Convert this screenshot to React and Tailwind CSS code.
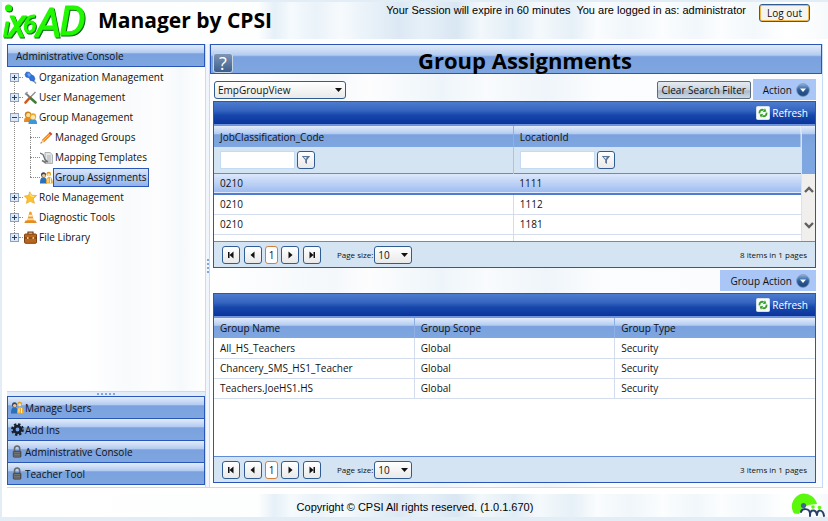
import { useState } from 'react'

const streaks =
  'bg-[linear-gradient(90deg,#ffffff_0%,#fdfefe_31%,#e6f0f8_33%,#f5fafd_35%,#eaf3f9_38%,#f6fafd_41%,#eaf3f9_44%,#dce9f4_48%,#e6f0f8_51%,#d9e7f3_55%,#f2f8fb_58%,#e1edf6_62%,#f4f9fc_65%,#e6f0f7_69%,#fafcfe_72%,#f0f6fa_76%,#fbfdfe_80%,#f1f7fb_84%,#fbfdfe_87%,#f3f8fb_91%,#ffffff_95%,#f7fafc_100%)]'
const glossy = 'bg-[linear-gradient(180deg,#e3ecfa_0%,#b4ccf2_36%,#7ba2de_42%,#7ea6e0_100%)]'
const navy = 'bg-[linear-gradient(180deg,#4d7bcf_0%,#3464bf_40%,#1747ab_60%,#0a349b_100%)]'
const softButton = 'border border-[#2f5d93] rounded-[3px] bg-[linear-gradient(180deg,#ffffff,#e9e9e9)]'

const tree = [
  { label: 'Organization Management', icon: PinIcon },
  { label: 'User Management', icon: ToolsIcon },
  {
    label: 'Group Management',
    icon: PeopleIcon,
    children: [
      { label: 'Managed Groups', icon: PencilIcon },
      { label: 'Mapping Templates', icon: TemplateIcon },
      { label: 'Group Assignments', icon: AssignIcon },
    ],
  },
  { label: 'Role Management', icon: StarIcon },
  { label: 'Diagnostic Tools', icon: ConeIcon },
  { label: 'File Library', icon: CaseIcon },
]

const panels = [
  { label: 'Manage Users', icon: AssignIcon },
  { label: 'Add Ins', icon: GearIcon },
  { label: 'Administrative Console', icon: LockIcon },
  { label: 'Teacher Tool', icon: LockIcon },
]

const jobs = [
  { code: '0210', location: '1111' },
  { code: '0210', location: '1112' },
  { code: '0210', location: '1181' },
]

const groups = [
  { name: 'All_HS_Teachers', scope: 'Global', type: 'Security' },
  { name: 'Chancery_SMS_HS1_Teacher', scope: 'Global', type: 'Security' },
  { name: 'Teachers.JoeHS1.HS', scope: 'Global', type: 'Security' },
]

/* ---------- icons ---------- */

function Logo() {
  return (
    <svg
      viewBox="0 0 84 36"
      className="w-[84px] h-9 shrink-0 overflow-visible drop-shadow-[1px_1px_0_#0b6b12]"
      role="img"
      aria-label="ixoAD"
    >
      <text
        x="1"
        y="35"
        fontFamily="Roboto, Liberation Sans, sans-serif"
        fontStyle="italic"
        strokeWidth="1.2"
        strokeLinejoin="round"
        fill="#22f800"
        stroke="#22f800"
      >
        <tspan fontSize="28">ı</tspan>
        <tspan fontSize="38" dx="-2">x</tspan>
        <tspan fontSize="25" dx="-3" dy="-4">6</tspan>
        <tspan fontSize="41" dx="-1" dy="4">A</tspan>
        <tspan fontSize="41" dx="-2" dy="-2">D</tspan>
      </text>
      <circle cx="6.5" cy="6" r="3.6" fill="#22f800" />
    </svg>
  )
}

function PinIcon() {
  return (
    <svg viewBox="0 0 13 13" className="w-[13px] h-[13px] shrink-0">
      <path d="M8 8l4 4.5" stroke="#8a98a8" strokeWidth="1.5" />
      <path d="M1 3.5L2.5 1l3 .4 1.6 2.2L9.8 5l1.2 3-1.4 2.2-3.2-.8-1.2-2.6L2 6z" fill="#2f74dc" stroke="#1c4fae" strokeWidth=".6" />
      <path d="M3 3l2-1 2 2-2 2z" fill="#6fa6f2" />
    </svg>
  )
}

function ToolsIcon() {
  return (
    <svg viewBox="0 0 13 13" className="w-[13px] h-[13px] shrink-0">
      <path d="M11.5 1L6 6.5" stroke="#8b9096" strokeWidth="1.4" />
      <path d="M6 6.5L1.5 11.5" stroke="#d4561e" strokeWidth="2.6" strokeLinecap="round" />
      <path d="M1.5 2l4.5 4.5" stroke="#777c80" strokeWidth="2" />
      <path d="M1 3.5L3.5 1" stroke="#9aa0a4" strokeWidth="1.4" />
      <path d="M7 7.5l4.5 4" stroke="#3f7d3a" strokeWidth="2.6" strokeLinecap="round" />
    </svg>
  )
}

function PeopleIcon() {
  return (
    <svg viewBox="0 0 13 13" className="w-[13px] h-[13px] shrink-0">
      <path d="M0 11c0-4 1-5 4-5s3 1 3 5z" fill="#e58a1e" />
      <circle cx="4" cy="3.6" r="3.2" fill="#c98518" />
      <circle cx="4.3" cy="4.2" r="2.1" fill="#ffdca0" />
      <path d="M4.5 13C4.5 9 6 8 8.8 8s4.200 1 4.200 5z" fill="#3b98d8" />
      <circle cx="9" cy="5.4" r="3.2" fill="#e8a928" />
      <circle cx="9" cy="6.2" r="2.2" fill="#ffe6b8" />
    </svg>
  )
}

function PencilIcon() {
  return (
    <svg viewBox="0 0 13 13" className="w-[13px] h-[13px] shrink-0">
      <path d="M.5 12.5l1.3-3.6 2.4 2.3z" fill="#f3d7a8" />
      <path d="M1.8 8.9L8.6 2.2l2.4 2.4-6.8 6.6z" fill="#ee8a22" />
      <path d="M3 10L9.8 3.3" stroke="#ffc45c" />
      <path d="M8.6 2.2L10 .8l2.4 2.3L11 4.6z" fill="#c2492c" />
      <path d="M.5 12.5l.5-1.4.9.9z" fill="#333" />
    </svg>
  )
}

function TemplateIcon() {
  return (
    <svg viewBox="0 0 13 13" className="w-[13px] h-[13px] shrink-0">
      <path d="M5 1.5h5l2.5 2.3v8.7H5z" fill="#e3e5e6" stroke="#9b9fa3" strokeWidth=".8" />
      <path d="M7 5h4M7 7h4M7 9h4M7 11h4" stroke="#a0a4a8" strokeWidth=".8" />
      <path d="M0 2l3 1.5 2 5 3 2.5" stroke="#6b7074" strokeWidth="1.3" fill="none" />
      <path d="M2 9.5l3 1.8 2-1" stroke="#777" strokeWidth="1.6" fill="none" />
    </svg>
  )
}

function AssignIcon() {
  return (
    <svg viewBox="0 0 13 13" className="w-[13px] h-[13px] shrink-0">
      <path d="M0 12.5C0 8 1 6.3 3.4 6.3S7 8 7 12.5z" fill="#2c6fbb" />
      <circle cx="3.5" cy="3.8" r="2.5" fill="#34445e" />
      <circle cx="3.7" cy="4.6" r="1.7" fill="#f2c78c" />
      <circle cx="8.7" cy="3" r="2.3" fill="#dd9a1c" />
      <circle cx="8.7" cy="3.7" r="1.5" fill="#ffe0a6" />
      <path d="M6 12.5C6 8 7 6 9.2 6s3.6 2 3.6 6.5z" fill="#efab2e" />
      <path d="M8 7.5v4M10.5 7v5" stroke="#fff2cc" />
    </svg>
  )
}

function StarIcon() {
  return (
    <svg viewBox="0 0 13 13" className="w-[13px] h-[13px] shrink-0">
      <path d="M5.7.8l2 3.4 5 .3-3.5 3.2 1.3 4.6-4.3-2-3.8 2.2.8-4.6L.4 5l4.1-.6z" fill="#fcc12e" stroke="#e6a01c" strokeWidth=".6" />
      <path d="M5.8 2.5L7 5.2l3 .3" stroke="#ffe88e" fill="none" />
    </svg>
  )
}

function ConeIcon() {
  return (
    <svg viewBox="0 0 13 13" className="w-[13px] h-[13px] shrink-0">
      <path d="M1.5 9.5h10l1.3 2.6H.3z" fill="#e28c24" />
      <path d="M5.5.8h1.8L10 10H3z" fill="#f09a2e" />
      <path d="M4.8 3.8h3.2l.5 1.8H4.2zM3.6 7.6h5.7l.3 1.2H3.2z" fill="#fff3dc" />
    </svg>
  )
}

function CaseIcon() {
  return (
    <svg viewBox="0 0 13 13" className="w-[13px] h-[13px] shrink-0">
      <path d="M4 3V1.2h5V3" stroke="#7c4314" strokeWidth="1.3" fill="none" />
      <rect x=".5" y="3" width="12" height="9.3" rx="1" fill="#b7651f" stroke="#7c4314" />
      <path d="M.5 7h12" stroke="#6d390f" />
      <path d="M3 6h1.6v2H3zM8.5 6h1.6v2H8.5z" fill="#f3c06a" />
    </svg>
  )
}

function GearIcon() {
  return (
    <svg viewBox="0 0 13 13" className="w-[13px] h-[13px] shrink-0">
      <circle cx="6.5" cy="6.5" r="3.3" fill="none" stroke="#17202e" strokeWidth="2.8" />
      <circle cx="6.5" cy="6.5" r="5.3" fill="none" stroke="#17202e" strokeWidth="2.2" strokeDasharray="2.3 1.863" />
    </svg>
  )
}

function LockIcon() {
  return (
    <svg viewBox="0 0 13 13" className="w-[13px] h-[13px] shrink-0">
      <path d="M3.5 6V3.8C3.5 0 8.7 0 8.7 3.8V6" fill="none" stroke="#666b70" strokeWidth="1.6" />
      <rect x="2.2" y="6" width="7.8" height="6.2" rx="1" fill="#56585a" stroke="#3a3c3e" strokeWidth=".6" />
      <path d="M3 7.6h6M3 9.4h6M3 11h6" stroke="#8a8c8e" strokeWidth=".6" />
    </svg>
  )
}

function FunnelIcon() {
  return (
    <svg viewBox="0 0 10 10" className="w-[10px] h-[10px]">
      <path d="M.8 1h8.4L6 5v4L4.2 7.8V5z" fill="#5a7598" />
      <path d="M2.6 2h3.2L4.9 4.2z" fill="#dfe9f5" />
    </svg>
  )
}

function RefreshIcon() {
  return (
    <svg viewBox="0 0 14 14" className="w-[14px] h-[14px] shrink-0">
      <rect x=".5" y=".5" width="13" height="13" rx="1" fill="#f8fbf8" stroke="#d5dfe8" />
      <path d="M3.6 7.4C3 4.6 5.6 3 7.6 4.2" fill="none" stroke="#35a02a" strokeWidth="1.8" />
      <path d="M6.8 6.2l3.6-.6L9 2.3z" fill="#35a02a" />
      <path d="M10.4 6.6c.6 2.8-2 4.4-4 3.2" fill="none" stroke="#35a02a" strokeWidth="1.8" />
      <path d="M7.2 7.8l-3.6.6L5 11.700z" fill="#35a02a" />
    </svg>
  )
}

function RoundArrow() {
  return (
    <svg viewBox="0 0 14 14" className="w-[14px] h-[14px] shrink-0">
      <defs>
        <linearGradient id="ball" x1="0" y1="0" x2="0" y2="1">
          <stop offset="0" stopColor="#8db2dc" />
          <stop offset=".5" stopColor="#2c5c98" />
          <stop offset="1" stopColor="#1d4478" />
        </linearGradient>
      </defs>
      <circle cx="7" cy="7" r="6.4" fill="url(#ball)" stroke="#7d9cc4" strokeWidth=".8" />
      <path d="M4 5.6h6L7 9z" fill="#fff" />
    </svg>
  )
}

function FooterMark() {
  return (
    <svg viewBox="0 0 36 24" className="w-9 h-6" role="img" aria-label="CPSI">
      <path d="M4 20.5A13 13 0 0 1 13 .5 13.5 13.5 0 0 1 27 11l-9 1-6 4-3 5z" fill="#5cf80c" />
      <g fill="none" stroke="#27406a" strokeWidth="2" strokeLinecap="round">
        <path d="M11 19c1-4 8-4 9 1v3M20 22c0-6 6-6 7 0M27 22c0-6 6-6 7 1" />
      </g>
      <circle cx="13.5" cy="12.5" r="2.6" fill="#3e6790" />
      <circle cx="23" cy="14" r="1.8" fill="#5cf80c" />
      <circle cx="29.5" cy="14.5" r="1.8" fill="#5cf80c" />
    </svg>
  )
}

/* ---------- pieces ---------- */

function TreeRow({ item, selected, onSelect }) {
  const Icon = item.icon
  return (
    <button onClick={() => onSelect(item.label)} className="flex items-center h-5 whitespace-nowrap">
      <Icon />
      <span
        className={
          selected
            ? 'h-[19px] leading-[17px] px-px border border-[#2a56b8] bg-[linear-gradient(180deg,#dbe7fb,#8fb2ec)]'
            : 'h-[19px] leading-[17px] px-px border border-transparent'
        }
      >
        {item.label}
      </span>
    </button>
  )
}

function NavTree({ selected, onSelect }) {
  const [open, setOpen] = useState(['Group Management'])
  const toggle = (label) =>
    setOpen(open.includes(label) ? open.filter((l) => l !== label) : [...open, label])

  return (
    <ul className="pl-[3px] flex-1 bg-[linear-gradient(90deg,#ffffff_0%,#ffffff_40%,#f8fafc_60%,#fdfdfe_75%,#f6f9fb_88%,#ffffff_100%)]">
      {tree.map((item, i) => {
        const isOpen = open.includes(item.label)
        return (
          <li key={item.label} className="relative">
            {i < tree.length - 1 && (
              <span className="absolute left-1 top-[10px] -bottom-[10px] border-l border-dotted border-[#8c8c8c]" />
            )}
            <div className="flex items-center">
              <button
                onClick={() => toggle(item.label)}
                aria-label={'Toggle ' + item.label}
                className="relative w-[9px] h-[9px] border border-[#8aa3c4] bg-[#dfe9f6] flex items-center justify-center"
              >
                <svg viewBox="0 0 5 5" className="w-[5px] h-[5px]">
                  <path d={isOpen ? 'M0 2.5h5' : 'M0 2.5h5M2.5 0v5'} stroke="#27405f" />
                </svg>
              </button>
              <span className="w-1 mr-px border-t border-dotted border-[#8c8c8c]" />
              <TreeRow item={item} selected={selected === item.label} onSelect={onSelect} />
            </div>
            {item.children && isOpen && (
              <ul className="pl-5">
                {item.children.map((child, n) => (
                  <li key={child.label} className="flex items-center relative">
                    <span
                      className={
                        n === item.children.length - 1
                          ? 'absolute left-0 top-0 h-[10px] border-l border-dotted border-[#8c8c8c]'
                          : 'absolute left-0 top-0 h-5 border-l border-dotted border-[#8c8c8c]'
                      }
                    />
                    <span className="w-[10px] border-t border-dotted border-[#8c8c8c]" />
                    <TreeRow item={child} selected={selected === child.label} onSelect={onSelect} />
                  </li>
                ))}
              </ul>
            )}
          </li>
        )
      })}
    </ul>
  )
}

function Dropdown({ label, options, className, value, onChange }) {
  return (
    <div className={'relative ' + className}>
      <select
        aria-label={label}
        value={value}
        onChange={onChange}
        className={'appearance-none w-full h-[18px] pl-[3px] pr-4 leading-4 ' + softButton}
      >
        {options.map((o) => (
          <option key={o}>{o}</option>
        ))}
      </select>
      <svg viewBox="0 0 7 4" className="absolute right-1 top-[7px] w-[7px] h-1 pointer-events-none">
        <path d="M0 0h7L3.5 4z" fill="#111" />
      </svg>
    </div>
  )
}

function ActionButton({ children }) {
  return (
    <button className="flex items-center gap-1 h-[21px] pl-[10px] pr-[6px] bg-[#a9c6f7]">
      {children}
      <RoundArrow />
    </button>
  )
}

function RefreshBar() {
  return (
    <div className={'flex justify-end items-center h-6 pr-[7px] border-b-2 border-[#6f93dc] ' + navy}>
      <button className="flex items-center gap-[2px] text-white">
        <RefreshIcon />
        Refresh
      </button>
    </div>
  )
}

function PagerButton({ label, d }) {
  return (
    <button aria-label={label} className={'w-[18px] h-[18px] flex items-center justify-center ' + softButton}>
      <svg viewBox="0 0 8 8" className="w-2 h-2">
        <path d={d} fill="#111" />
      </svg>
    </button>
  )
}

function Pager({ count }) {
  const [size, setSize] = useState('10')
  return (
    <div className="flex items-center h-[26px] pl-2 pr-2 bg-[#d5e4f3] border-t border-[#5f8bd8] text-[8px] whitespace-nowrap">
      <div className="flex items-center gap-1">
        <PagerButton label="First page" d="M1 1h1.5v6H1zM6.500 .5v7L2.500 4z" />
        <div className="flex items-center gap-[3px]">
          <PagerButton label="Previous page" d="M5.5 .5v7L1.500 4z" />
          <button className="w-[13px] h-[18px] text-[10px] bg-white border border-[#d0803a] rounded-[3px]">1</button>
          <PagerButton label="Next page" d="M2.5 .5v7L6.500 4z" />
        </div>
        <PagerButton label="Last page" d="M1.5 .5v7L5.500 4zM5.500 1H7v6H5.500z" />
      </div>
      <span className="ml-4 mr-px">Page size:</span>
      <Dropdown
        label="Page size"
        options={['10', '20', '50']}
        className="w-[38px] text-[10px]"
        value={size}
        onChange={(e) => setSize(e.target.value)}
      />
      <span className="ml-auto">{count} items in 1 pages</span>
    </div>
  )
}

function FilterCell({ label }) {
  return (
    <div className="flex items-center gap-[2px]">
      <input aria-label={label} className="w-[75px] h-[18px] px-1 bg-white border border-[#c4dbf3]" />
      <button aria-label={'Apply ' + label} className={'w-[18px] h-[18px] flex items-center justify-center ' + softButton}>
        <FunnelIcon />
      </button>
    </div>
  )
}

function JobGrid() {
  return (
    <section className="border border-[#2a56b8] bg-white">
      <RefreshBar />
      <div className="flex h-[115px] overflow-hidden">
        <table className="flex-1 w-full table-fixed border-collapse text-left">
          <thead>
            <tr className={'h-[21px] ' + glossy}>
              <th className="w-[51%] pl-[6px] font-normal border-r border-[#8fb0e4]">JobClassification_Code</th>
              <th className="pl-[6px] font-normal">LocationId</th>
            </tr>
            <tr className="h-[26px] bg-[#d5e4f3] border-b border-[#5f8bd8]">
              <td className="pl-[6px] border-r border-[#a8c4ec]">
                <FilterCell label="Filter JobClassification_Code" />
              </td>
              <td className="pl-[6px]">
                <FilterCell label="Filter LocationId" />
              </td>
            </tr>
          </thead>
          <tbody>
            {jobs.map((job, i) => (
              <tr
                key={job.location}
                className={
                  i === 0
                    ? 'h-[21px] bg-[linear-gradient(180deg,#e0eafc,#9fbdf0)] border-b-2 border-[#4f7bd0]'
                    : 'h-5 border-b border-[#d3ddee]'
                }
              >
                <td className={i === 0 ? 'pl-[6px]' : 'pl-[6px] border-r border-[#d3ddee]'}>{job.code}</td>
                <td className="pl-[6px]">{job.location}</td>
              </tr>
            ))}
            <tr className="h-2">
              <td className="border-r border-[#d3ddee]" />
              <td />
            </tr>
          </tbody>
        </table>
        <div className="w-[14px] flex flex-col border-l border-[#d5e4f3]">
          <div className={'h-[21px] ' + glossy} />
          <div className="h-[27px] bg-[#7ea6e0]" />
          <div className="flex-1 bg-[#f0efee] flex flex-col items-center justify-between py-3">
            <svg viewBox="0 0 10 7" className="w-[10px] h-[7px]">
              <path d="M1 6l4-4 4 4" fill="none" stroke="#606060" strokeWidth="2.4" />
            </svg>
            <svg viewBox="0 0 10 7" className="w-[10px] h-[7px]">
              <path d="M1 1l4 4 4-4" fill="none" stroke="#606060" strokeWidth="2.4" />
            </svg>
          </div>
        </div>
      </div>
      <Pager count={8} />
    </section>
  )
}

function GroupGrid() {
  return (
    <section className="border border-[#2a56b8] bg-white flex flex-col flex-1">
      <RefreshBar />
      <table className="w-full table-fixed border-collapse text-left">
        <thead>
          <tr className={'h-5 ' + glossy}>
            <th className="pl-[6px] font-normal border-r border-[#8fb0e4]">Group Name</th>
            <th className="pl-[6px] font-normal border-r border-[#8fb0e4]">Group Scope</th>
            <th className="pl-[6px] font-normal">Group Type</th>
          </tr>
        </thead>
        <tbody>
          {groups.map((g) => (
            <tr key={g.name} className="h-5 border-b border-[#d3ddee]">
              <td className="pl-[6px] border-r border-[#d3ddee]">{g.name}</td>
              <td className="pl-[6px] border-r border-[#d3ddee]">{g.scope}</td>
              <td className="pl-[6px]">{g.type}</td>
            </tr>
          ))}
        </tbody>
      </table>
      <div className="flex-1" />
      <Pager count={3} />
    </section>
  )
}

export default function App() {
  const [selected, setSelected] = useState('Group Assignments')
  const [view, setView] = useState('EmpGroupView')

  return (
    <div className="min-h-screen flex flex-col bg-[#e3edf6] pt-[2px] pl-[2px] pb-1 font-['Open_Sans','Noto_Sans',sans-serif] text-[10px] leading-4 text-[#111]">
      <div className="flex-1 flex flex-col bg-white">
        <header className={'flex items-start h-[37px] pr-[18px] ' + streaks}>
          <Logo />
          <h1 className="ml-3 mt-1 text-[21px] leading-7 font-bold text-black whitespace-nowrap">Manager by CPSI</h1>
          <p className="ml-auto font-['Liberation_Sans',sans-serif] text-[11px] whitespace-pre text-black">
            {'Your Session will expire in 60 minutes  You are logged in as: administrator'}
          </p>
          <button className="ml-[13px] mt-[2px] w-[51px] h-[18px] leading-4 border border-[#2f5d93] rounded-[3px] bg-[#f6f4f0] shadow-[inset_0_0_0_1px_#f0b94e]">
            Log out
          </button>
        </header>

        <main className="flex-1 flex mt-[5px] ml-[5px] mr-[5px] mb-[6px] border-b border-[#c5dbf7]">
          <aside className="w-[198px] shrink-0 flex flex-col mb-[2px]">
            <h2 className={'h-[23px] pl-2 leading-[22px] border border-[#2a56b8] ' + glossy}>Administrative Console</h2>
            <NavTree selected={selected} onSelect={setSelected} />
            <div className="h-[5px] flex items-center justify-center border-t border-[#c5dbf7] bg-[#e3edf9]">
              <span className="w-[18px] border-t-2 border-dotted border-[#7ea6e0]" />
            </div>
            <div className="flex flex-col border-b border-[#2a56b8]">
              {panels.map((p) => (
                <button
                  key={p.label}
                  className={'flex items-center gap-px h-[22px] pl-[3px] border border-b-0 border-[#2a56b8] ' + glossy}
                >
                  <p.icon />
                  {p.label}
                </button>
              ))}
            </div>
          </aside>

          <div className="w-[5px] shrink-0 flex items-center justify-center border-x border-[#c5dbf7] bg-[#f1f6fc]">
            <span className="h-[14px] border-l-2 border-dotted border-[#7ea6e0]" />
          </div>

          <div className="flex-1 min-w-0 flex flex-col border-r border-[#c5dbf7] bg-[linear-gradient(90deg,#ffffff_0%,#f4f8fb_20%,#fdfdfe_26%,#eef5fa_38%,#f9fbfd_45%,#eff5fa_55%,#fcfdfe_64%,#fafbfc_100%)]">
            <div className={'h-[30px] flex items-center pl-[2px] pr-1 border border-[#2a56b8] ' + glossy}>
              <button
                aria-label="Help"
                className="w-5 h-5 mt-[7px] rounded-[3px] border border-[#c9d6e8] bg-[linear-gradient(180deg,#7e95b4,#3d5f8c)] text-white text-[18px] leading-[18px]"
              >
                ?
              </button>
              <h2 className="flex-1 mt-[2px] text-center text-[22px] leading-7 font-bold text-black">Group Assignments</h2>
            </div>

            <div className="flex-1 flex flex-col pl-[3px] pr-[6px] pb-1">
              <div className="flex items-center h-[27px] pl-px pt-1">
                <Dropdown
                  label="View"
                  options={['EmpGroupView']}
                  className="w-[132px]"
                  value={view}
                  onChange={(e) => setView(e.target.value)}
                />
                <button className="ml-auto mr-[2px] h-[18px] w-[94px] leading-4 border border-[#5b6b80] rounded-[2px] bg-[linear-gradient(180deg,#e6ebf1_0%,#c9d3df_50%,#a9b8ca_55%,#cfdae6_100%)]">
                  Clear Search Filter
                </button>
                <ActionButton>Action</ActionButton>
              </div>
              <JobGrid />
              <div className="flex justify-end h-[25px] pt-[2px]">
                <ActionButton>Group Action</ActionButton>
              </div>
              <GroupGrid />
            </div>
          </div>
        </main>

        <footer className={'relative h-[23px] flex items-center justify-center ' + streaks}>
          <p className="mt-[2px] font-['Liberation_Sans',sans-serif] text-[11px] text-black">
            Copyright © CPSI All rights reserved. (1.0.1.670)
          </p>
          <div className="absolute right-[2px] bottom-0">
            <FooterMark />
          </div>
        </footer>
      </div>
    </div>
  )
}
